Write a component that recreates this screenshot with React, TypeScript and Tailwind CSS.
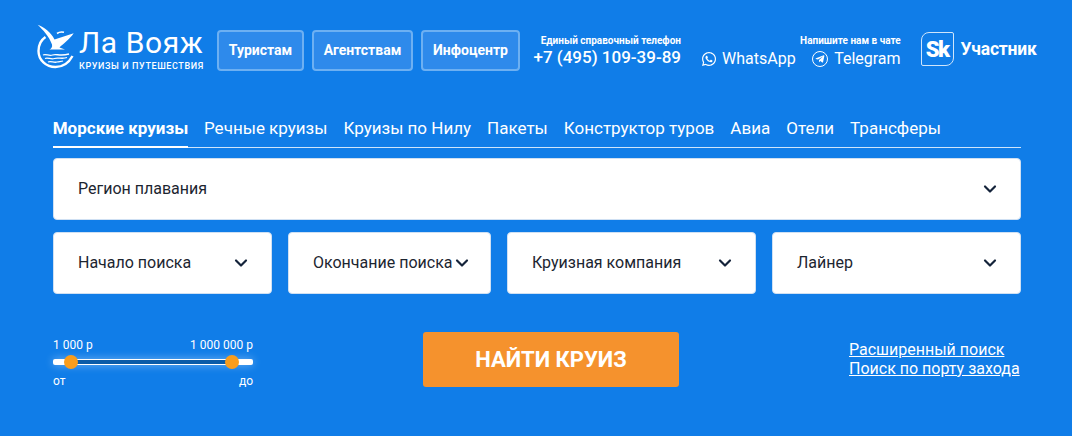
import { ChevronDown } from "lucide-react";
import { FaTelegramPlane, FaWhatsapp } from "react-icons/fa";

const tabs = ["Речные круизы", "Круизы по Нилу", "Пакеты", "Конструктор туров", "Авиа", "Отели", "Трансферы"];

function Logo() {
  return (
    <div className="flex w-[169px] items-start">
      <svg width="42" height="45" viewBox="0 0 42 45" className="shrink-0" fill="none">
        <path d="M1.7 .7 C8 3 15 8 18.5 15.5 L37.7 9.3 C33 16 27 20 23.5 23.5 L29 25.5 L13.5 25.5 C15.5 24.5 16.5 23 16 20.5 C13 12 7 6 1.7 .7Z" fill="#fff" />
        <path d="M9.5 13 C5 16 2.5 21 2.5 27 C2.5 36 10 43 19.5 43 C27 43 33 38.5 36.5 32" stroke="#fff" strokeWidth="2.4" />
        <path d="M21 9.5 C23 8 26 7.8 28 8.3" stroke="#fff" strokeWidth="1.6" />
        <path d="M7 31 C10 29.5 13 32.5 16.5 31 C20 29.5 24 32.5 33 30 M9 34.5 C12 33 15 36 18.5 34.5 C22 33 26 35.5 31 33.5 M12 38 C15 36.8 18 39 21 38 C23 37.3 25 37.8 27 37" stroke="#fff" strokeWidth="1.3" />
      </svg>
      <div className="ml-[1px] flex flex-col pt-[2px]">
        <span className="text-[30px] leading-[33px] tracking-[0.6px] whitespace-nowrap text-white">Ла Вояж</span>
        <span className="mt-[1px] text-[9px] leading-[12px] font-medium tracking-[0.6px] whitespace-nowrap text-white">КРУИЗЫ И ПУТЕШЕСТВИЯ</span>
      </div>
    </div>
  );
}

function NavButton({ label, width }: { label: string; width: string }) {
  return (
    <a className={`flex h-[41px] items-center justify-center rounded-[4px] border-2 border-[#6db0f2] bg-[#2e8aeb] text-[14px] font-bold text-white ${width}`}>
      {label}
    </a>
  );
}

function Select({ label, className }: { label: string; className: string }) {
  return (
    <div className={`flex h-[62px] items-center justify-between rounded-[4px] border border-[#cfe0f3] bg-white pr-[20px] pl-[24px] text-[16px] text-[#1c2530] ${className}`}>
      <span className="whitespace-nowrap">{label}</span>
      <ChevronDown size={20} strokeWidth={2.6} className="shrink-0 text-[#14233a]" />
    </div>
  );
}

function PriceSlider() {
  return (
    <div className="flex w-[200px] flex-col text-[12px] text-white">
      <div className="flex justify-between leading-[14px]">
        <span>1 000 р</span>
        <span>1 000 000 р</span>
      </div>
      <div className="relative mt-[7px] h-[6px] rounded-[2px] bg-white shadow-[0_0_8px_rgba(255,255,255,0.45)]">
        <div className="absolute top-0 right-[21px] left-[18px] h-[6px] border-y border-white bg-[#0b5ca8]" />
        <div className="absolute top-[-4px] left-[11px] h-[14px] w-[14px] rounded-full bg-[#f99d1c]" />
        <div className="absolute top-[-4px] right-[14px] h-[14px] w-[14px] rounded-full bg-[#f99d1c]" />
      </div>
      <div className="mt-[9px] flex justify-between leading-[14px]">
        <span>от</span>
        <span>до</span>
      </div>
    </div>
  );
}

export default function App() {
  return (
    <div className="h-[436px] w-[1072px] overflow-hidden bg-[#107de8] font-['Roboto',sans-serif]">
      <header className="flex items-start pt-[24px] pl-[36px]">
        <Logo />
        <nav className="mt-[6px] ml-[12px] flex gap-[8px]">
          <NavButton label="Туристам" width="w-[87px]" />
          <NavButton label="Агентствам" width="w-[101px]" />
          <NavButton label="Инфоцентр" width="w-[99px]" />
        </nav>
        <div className="mt-[11px] ml-[13px] flex w-[148px] flex-col items-end text-white">
          <span className="text-[10px] leading-[12px] font-bold whitespace-nowrap">Единый справочный телефон</span>
          <span className="text-[17px] leading-[20px] font-medium whitespace-nowrap">+7 (495) 109-39-89</span>
        </div>
        <a className="mt-[25px] ml-[20px] flex items-center gap-[5px] text-[16px] leading-[20px] text-white">
          <FaWhatsapp size={16} />
          WhatsApp
        </a>
        <div className="mt-[11px] ml-[15px] flex w-[90px] flex-col items-end text-white">
          <span className="text-[10px] leading-[12px] font-bold whitespace-nowrap">Напишите нам в чате</span>
          <a className="mt-[2px] flex items-center gap-[6px] text-[16px] leading-[20px]">
            <span className="flex h-[16px] w-[16px] items-center justify-center rounded-full border border-white">
              <FaTelegramPlane size={10} />
            </span>
            Telegram
          </a>
        </div>
        <div className="mt-[8px] ml-[20px] flex items-center gap-[7px] text-white">
          <div className="flex h-[34px] w-[33px] items-center justify-center rounded-[8px] rounded-tr-[2px] rounded-bl-[2px] border border-[#cfe5fb] text-[22px] font-black tracking-[-1.5px]">
            Sk
          </div>
          <span className="text-[17.5px] font-bold tracking-[-0.2px]">Участник</span>
        </div>
      </header>

      <main className="mt-[32px] mr-[51px] ml-[53px] flex flex-col">
        <div className="flex h-[44px] items-start gap-[16px] border-b border-[#cfe5fb] text-[17px] leading-[20px] text-white">
          <a className="flex h-[44px] w-[135px] justify-center border-b-2 border-white pt-[14px] font-bold whitespace-nowrap">Морские круизы</a>
          {tabs.map((tab) => (
            <a key={tab} className="pt-[14px] whitespace-nowrap">{tab}</a>
          ))}
        </div>

        <Select label="Регион плавания" className="mt-[10px] w-full" />

        <div className="mt-[12px] flex gap-[16px]">
          <Select label="Начало поиска" className="w-[219px]" />
          <Select label="Окончание поиска" className="w-[203px]" />
          <Select label="Круизная компания" className="w-[249px]" />
          <Select label="Лайнер" className="w-[249px]" />
        </div>

        <div className="mt-[38px] flex items-start">
          <div className="pt-[6px]">
            <PriceSlider />
          </div>
          <button className="ml-[170px] h-[55px] w-[256px] rounded-[3px] bg-[#f5922d] text-[22px] font-bold text-white">
            НАЙТИ КРУИЗ
          </button>
          <div className="mt-[8px] mr-[2px] ml-auto flex w-[170px] flex-col text-[16px] leading-[19px] text-white">
            <a className="underline whitespace-nowrap">Расширенный поиск</a>
            <a className="underline whitespace-nowrap">Поиск по порту захода</a>
          </div>
        </div>
      </main>
    </div>
  );
}
